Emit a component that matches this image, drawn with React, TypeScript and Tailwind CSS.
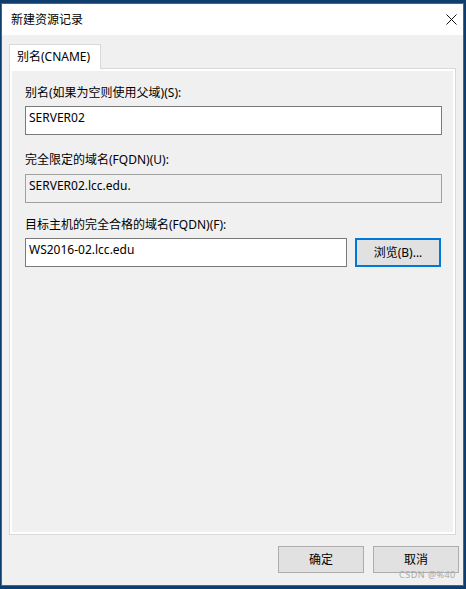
import React from "react";

const font = {
  fontFamily: '"Noto Sans", "Noto Sans CJK SC", sans-serif',
};

const Field = ({
  label,
  value,
  readOnly,
  className,
}: {
  label: string;
  value: string;
  readOnly?: boolean;
  className?: string;
}) => (
  <div className={className}>
    <div className="text-[12px] leading-[16px] text-black">{label}</div>
    <div
      className={
        readOnly
          ? "mt-[6px] h-[29px] w-[417px] border border-[#a0a0a0] bg-[#f0f0f0] pl-[3px] pt-[3px] text-[12px] leading-[16px] text-black"
          : "mt-[5px] h-[29px] w-[417px] border border-[#7a7a7a] bg-white pl-[3px] pt-[3px] text-[12px] leading-[16px] text-black"
      }
    >
      {value}
    </div>
  </div>
);

const App = () => {
  return (
    <div
      className="relative h-[589px] w-[466px] overflow-hidden bg-[#0f3d6e] pl-[1px] pt-[3px]"
      style={font}
    >
      <div className="flex h-[583px] w-[463px] flex-col border border-[#1f6fc0]">
        {/* title bar */}
        <div className="flex h-[31px] items-center justify-between bg-white pl-[9px] pr-[6px]">
          <span className="text-[12px] leading-[16px] text-black">新建资源记录</span>
          <svg width="11" height="11" viewBox="0 0 11 11" className="mt-[-1px]">
            <path d="M0.5 0.5 L10.5 10.5 M10.5 0.5 L0.5 10.5" stroke="#111" strokeWidth="1" />
          </svg>
        </div>

        {/* body */}
        <div className="flex flex-1 flex-col bg-[#f0f0f0] pl-[7px] pt-[9px]">
          <div className="relative z-10 mb-[-1px] flex h-[25px] w-[92px] items-center border border-b-0 border-[#d9d9d9] bg-white pl-[7px] text-[12px] text-black">
            别名(CNAME)
          </div>
          <div className="h-[467px] w-[447px] border border-[#d9d9d9]">
            <div className="h-full w-full border-2 border-white bg-[#f0f0f0] pl-[13px] pt-[14px]">
              <Field label="别名(如果为空则使用父域)(S):" value="SERVER02" />
              <Field
                className="mt-[17px]"
                label="完全限定的域名(FQDN)(U):"
                value="SERVER02.lcc.edu."
                readOnly
              />
              <div className="mt-[14px]">
                <div className="text-[12px] leading-[16px] text-black">
                  目标主机的完全合格的域名(FQDN)(F):
                </div>
                <div className="mt-[5px] flex items-start gap-[8px]">
                  <div className="h-[29px] w-[322px] border border-[#7a7a7a] bg-white pl-[3px] pt-[3px] text-[12px] leading-[16px] text-black">
                    WS2016-02.lcc.edu
                  </div>
                  <button className="flex h-[29px] w-[86px] items-center justify-center border-2 border-[#0078d7] bg-[#e1e1e1] text-[12px] text-black">
                    浏览(B)...
                  </button>
                </div>
              </div>
            </div>
          </div>

          <div className="mt-[11px] flex justify-end gap-[9px] pr-[4px]">
            <button className="flex h-[27px] w-[86px] items-center justify-center border border-[#adadad] bg-[#e1e1e1] text-[12px] text-black">
              确定
            </button>
            <button className="flex h-[27px] w-[86px] items-center justify-center border border-[#adadad] bg-[#e1e1e1] text-[12px] text-black">
              取消
            </button>
          </div>
        </div>
      </div>

      <span className="absolute left-[399px] top-[569px] text-[9px] leading-[12px] tracking-[0.5px] text-[#a8a8a8]">
        CSDN @%40
      </span>
    </div>
  );
};

export default App;
